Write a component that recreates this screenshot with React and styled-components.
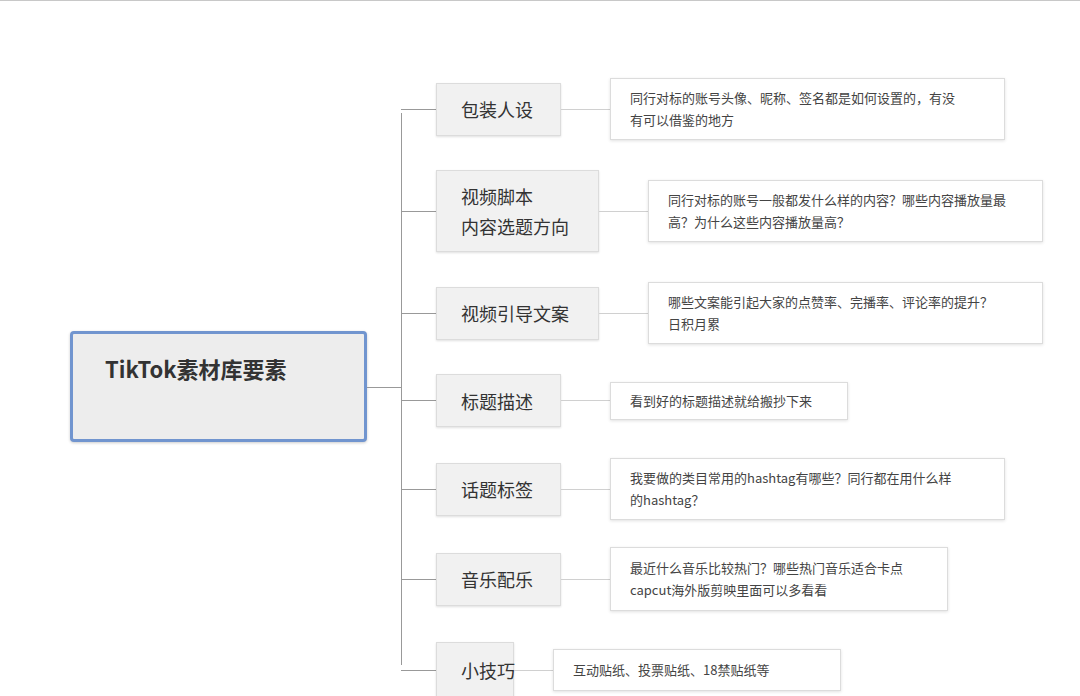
import React from "react";
import styled, { createGlobalStyle } from "styled-components";

const Global = createGlobalStyle`
  html, body { margin: 0; padding: 0; background: #fff; }
  body { font-family: "Noto Sans CJK SC", "Noto Sans", sans-serif; }
`;

const Page = styled.div`
  width: 1080px; height: 696px; overflow: hidden; box-sizing: border-box;
  border-top: 1px solid #c8c8c8; display: flex; align-items: flex-start;
`;
const RootBox = styled.div`
  margin: 330px 0 0 70px; width: 297px; height: 111px; box-sizing: border-box;
  background: #ededed; border: 3px solid #7195cf; border-radius: 4px;
  padding: 18px 0 0 32px; font-size: 22px; font-weight: 700; color: #333;
  box-shadow: 0 1px 3px rgba(0,0,0,0.2);
`;
const RootLine = styled.div`
  margin-top: 386px; width: 34px; height: 1px; background: #999;
`;
const Branches = styled.div`
  position: relative; display: flex; flex-direction: column; padding-top: 77px;
  &::before { content: ""; position: absolute; left: 0; top: 112px; height: 552px; width: 1px; background: #999; }
`;
const Row = styled.div`
  display: flex; align-items: center; height: ${p => p.$h}px; margin-top: ${p => p.$gap}px;
`;
const Stub = styled.div`
  width: 35px; height: 1px; background: #999;
`;
const Node = styled.div`
  width: ${p => p.$w}px; height: ${p => p.$h}px; box-sizing: border-box; flex-shrink: 0;
  background: #f1f1f1; border: 1px solid #dcdcdc; box-shadow: 0 1px 2px rgba(0,0,0,0.12);
  display: flex; flex-direction: column; justify-content: center; padding-left: 24px;
  font-size: 18px; line-height: 30px; color: #333; white-space: nowrap;
`;
const Link = styled.div`
  width: ${p => p.$w}px; height: 1px; background: #d0d0d0;
`;
const Desc = styled.div`
  width: ${p => p.$w}px; height: ${p => p.$h}px; box-sizing: border-box; flex-shrink: 0;
  background: #fff; border: 1px solid #dcdcdc; box-shadow: 0 1px 3px rgba(0,0,0,0.12);
  display: flex; flex-direction: column; justify-content: center; padding-left: 19px;
  font-size: 13px; line-height: 22px; color: #444; white-space: nowrap;
`;

const rows = [
  { gap: 0, h: 62, label: ["包装人设"], nw: 125, nh: 53, lw: 49, dw: 395, dh: 62, desc: ["同行对标的账号头像、昵称、签名都是如何设置的，有没", "有可以借鉴的地方"] },
  { gap: 30, h: 82, label: ["视频脚本", "内容选题方向"], nw: 163, nh: 82, lw: 49, dw: 395, dh: 62, desc: ["同行对标的账号一般都发什么样的内容？哪些内容播放量最", "高？为什么这些内容播放量高？"] },
  { gap: 30, h: 62, label: ["视频引导文案"], nw: 163, nh: 53, lw: 49, dw: 395, dh: 62, desc: ["哪些文案能引起大家的点赞率、完播率、评论率的提升？", "日积月累"] },
  { gap: 30, h: 53, label: ["标题描述"], nw: 125, nh: 53, lw: 49, dw: 238, dh: 38, desc: ["看到好的标题描述就给搬抄下来"] },
  { gap: 31, h: 62, label: ["话题标签"], nw: 125, nh: 53, lw: 49, dw: 395, dh: 62, desc: ["我要做的类目常用的hashtag有哪些？同行都在用什么样", "的hashtag？"] },
  { gap: 27, h: 64, label: ["音乐配乐"], nw: 125, nh: 53, lw: 49, dw: 338, dh: 64, desc: ["最近什么音乐比较热门？哪些热门音乐适合卡点", "capcut海外版剪映里面可以多看看"] },
  { gap: 31, h: 56, label: ["小技巧"], nw: 78, nh: 56, lw: 39, dw: 288, dh: 42, desc: ["互动贴纸、投票贴纸、18禁贴纸等"] },
];

export default function App() {
  return (
    <>
      <Global />
      <Page>
        <RootBox>TikTok素材库要素</RootBox>
        <RootLine />
        <Branches>
          {rows.map((r, i) => (
            <Row key={i} $h={r.h} $gap={r.gap}>
              <Stub />
              <Node $w={r.nw} $h={r.nh}>{r.label.map((t, j) => <span key={j}>{t}</span>)}</Node>
              <Link $w={r.lw} />
              <Desc $w={r.dw} $h={r.dh}>{r.desc.map((t, j) => <span key={j}>{t}</span>)}</Desc>
            </Row>
          ))}
        </Branches>
      </Page>
    </>
  );
}
